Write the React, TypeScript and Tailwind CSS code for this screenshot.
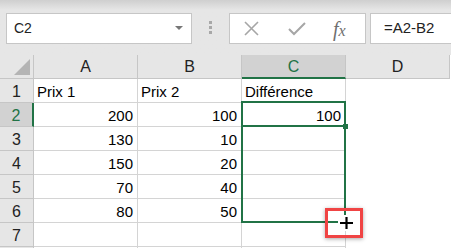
import { FC } from "react"

const rows: [string, string, string, string][] = [
  ["1", "Prix 1", "Prix 2", "Différence"],
  ["2", "200", "100", "100"],
  ["3", "130", "10", ""],
  ["4", "150", "20", ""],
  ["5", "70", "40", ""],
  ["6", "80", "50", ""],
  ["7", "", "", ""],
  ["", "", "", ""],
]

const cols = ["A", "B", "C", "D"]

const Toolbar: FC = () => (
  <div className="flex h-[55px] items-start bg-gradient-to-b from-[#cfcfcf] via-[#e6e6e6] via-[18%] to-[#e6e6e6] pl-[6px] pt-[13px]">
    <div className="flex h-[31px] w-[186px] items-center justify-between border border-[#c6c6c6] bg-white pl-[7px] pr-[8px]">
      <span className="text-[14px] text-[#222]">C2</span>
      <svg width="8" height="5" viewBox="0 0 8 5">
        <path d="M0 0 H8 L4 4 Z" fill="#777" />
      </svg>
    </div>
    <div className="ml-[17px] mt-[8px] flex flex-col gap-[2px]">
      <div className="size-[3px] bg-[#a8a8a8]" />
      <div className="size-[3px] bg-[#a8a8a8]" />
      <div className="size-[3px] bg-[#a8a8a8]" />
    </div>
    <div className="ml-[17px] flex h-[31px] w-[137px] items-center border border-[#c6c6c6] bg-white">
      <svg className="ml-[13px]" width="17" height="17" viewBox="0 0 17 17">
        <path d="M2 2 L15 15 M15 2 L2 15" stroke="#a6a6a6" strokeWidth="1.6" />
      </svg>
      <svg className="ml-[28px]" width="18" height="16" viewBox="0 0 18 16">
        <path d="M1 8 L6 13 L17 2" stroke="#a6a6a6" strokeWidth="2" fill="none" />
      </svg>
      <span className="ml-[27px] font-['Liberation_Serif'] text-[20px] italic leading-none text-[#6f6f6f]">
        f<span className="text-[16px]">x</span>
      </span>
    </div>
    <div className="ml-[4px] flex h-[31px] flex-1 items-center border-y border-l border-[#c6c6c6] bg-white pl-[13px]">
      <span className="text-[15px] text-[#222]">=A2-B2</span>
    </div>
  </div>
)

const HeaderRow: FC = () => (
  <div className="flex h-[24px]">
    <div className="flex w-[34px] items-end justify-end border-b border-r border-[#c6c6c6] bg-[#e6e6e6] pb-[3px] pr-[3px]">
      <svg width="16" height="16" viewBox="0 0 16 16">
        <path d="M16 0 L16 16 L0 16 Z" fill="#b4b4b4" />
      </svg>
    </div>
    {cols.map((c) => (
      <div
        key={c}
        className={
          c === "C"
            ? "flex w-[104px] items-center justify-center border-b-2 border-r border-b-[#217346] border-r-[#c6c6c6] bg-[#d2d2d2] pt-[1px] text-[16px] text-[#217346]"
            : "flex w-[104px] items-center justify-center border-b border-r border-[#c6c6c6] bg-[#e6e6e6] pt-[1px] text-[16px] text-[#222]"
        }
      >
        {c}
      </div>
    ))}
  </div>
)

const isNum = (v: string) => /^\d+$/.test(v)

const DataRow: FC<{ r: [string, string, string, string] }> = ({ r }) => {
  const [n, ...cells] = r
  const active = n === "2"
  return (
    <div className="flex h-[24px]">
      <div
        className={
          active
            ? "w-[34px] border-b border-r-2 border-b-[#c6c6c6] border-r-[#217346] bg-[#d2d2d2] text-center text-[16px] leading-[25px] text-[#217346]"
            : "w-[34px] border-b border-r border-[#c6c6c6] bg-[#e6e6e6] text-center text-[16px] leading-[25px] text-[#222]"
        }
      >
        {n}
      </div>
      {cells.map((v, i) => (
        <div
          key={i}
          className={
            isNum(v)
              ? "w-[104px] border-b border-r border-[#d4d4d4] pr-[4px] text-right text-[15px] leading-[26px] text-black"
              : "w-[104px] whitespace-nowrap border-b border-r border-[#d4d4d4] pl-[3px] text-[15px] leading-[26px] text-black"
          }
        >
          {v}
        </div>
      ))}
    </div>
  )
}

export default function App() {
  return (
    <div className="relative h-[248px] w-[451px] overflow-hidden bg-white font-['Liberation_Sans',sans-serif]">
      <Toolbar />
      <div>
        <HeaderRow />
        {rows.map((r, i) => (
          <DataRow key={i} r={r} />
        ))}
      </div>

      {/* selection C2:C6 */}
      <div className="absolute left-[241px] top-[101px] h-[122px] w-[105px] border-2 border-[#217346]" />
      <div className="absolute left-[241px] top-[125px] h-[2px] w-[105px] bg-[#217346]" />
      <div className="absolute left-[343px] top-[124px] h-[5px] w-[5px] bg-[#217346]" />

      {/* fill cursor + highlight */}
      <div className="absolute left-[325px] top-[208px] h-[30px] w-[38px] border-[3px] border-[#f04444] shadow-[0_1px_4px_rgba(0,0,0,0.35)]" />
      <svg className="absolute left-[336px] top-[213px]" width="21" height="20" viewBox="0 0 21 20">
        <path d="M10.5 2 V18 M2 10 H19" stroke="white" strokeWidth="5" />
        <path d="M10.5 4 V16 M4 10 H17" stroke="black" strokeWidth="2.2" />
      </svg>
    </div>
  )
}
